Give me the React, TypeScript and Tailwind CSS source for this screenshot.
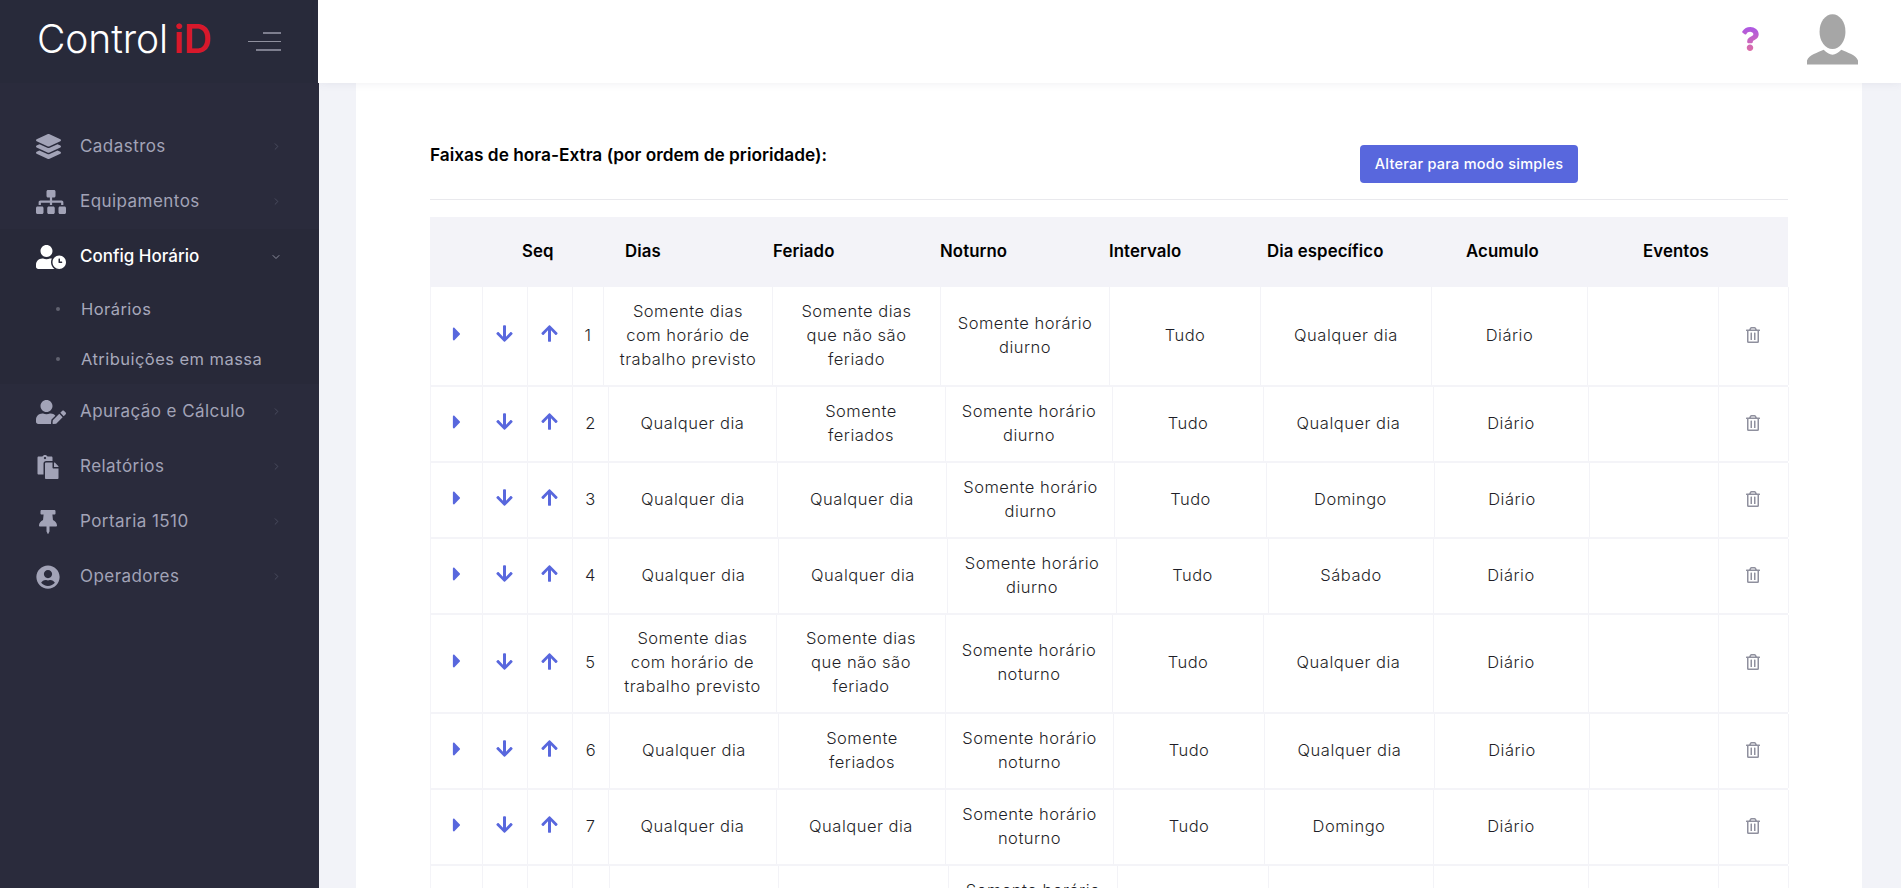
import React from 'react';
import {
  FaLayerGroup, FaSitemap, FaUserClock, FaUserEdit, FaPaste, FaThumbtack, FaUserCircle,
  FaArrowDown, FaArrowUp, FaCaretRight, FaRegTrashAlt,
} from 'react-icons/fa';
import { ChevronRight, ChevronDown } from 'lucide-react';

const menuTop = [
  { label: 'Cadastros', icon: <FaLayerGroup size={25} /> },
  { label: 'Equipamentos', icon: <FaSitemap size={30} /> },
];

const menuBottom = [
  { label: 'Apuração e Cálculo', icon: <FaUserEdit size={30} /> },
  { label: 'Relatórios', icon: <FaPaste size={24} /> },
  { label: 'Portaria 1510', icon: <FaThumbtack size={24} /> },
  { label: 'Operadores', icon: <FaUserCircle size={24} /> },
];

const headers = [
  { label: 'Seq', className: 'w-[195px] pl-[92px]' },
  { label: 'Dias', className: 'w-[148px]' },
  { label: 'Feriado', className: 'w-[167px]' },
  { label: 'Noturno', className: 'w-[169px]' },
  { label: 'Intervalo', className: 'w-[158px]' },
  { label: 'Dia específico', className: 'w-[199px]' },
  { label: 'Acumulo', className: 'w-[177px]' },
  { label: 'Eventos', className: 'w-[100px]' },
];

const uteis = 'Somente dias\ncom horário de\ntrabalho previsto';
const naoFeriado = 'Somente dias\nque não são\nferiado';
const feriados = 'Somente\nferiados';
const diurno = 'Somente horário\ndiurno';
const noturno = 'Somente horário\nnoturno';

const rows = [
  { seq: 1, h: 'h-[100px]', cols: 'grid-cols-[52px_45px_45px_31px_169px_168px_169px_151px_171px_156px_131px_70px]', cells: [uteis, naoFeriado, diurno, 'Tudo', 'Qualquer dia', 'Diário'] },
  { seq: 2, h: 'h-[76px]', cols: 'grid-cols-[52px_45px_45px_36px_168px_169px_167px_151px_170px_155px_130px_70px]', cells: ['Qualquer dia', feriados, diurno, 'Tudo', 'Qualquer dia', 'Diário'] },
  { seq: 3, h: 'h-[76px]', cols: 'grid-cols-[52px_45px_45px_36px_169px_169px_168px_152px_168px_155px_129px_70px]', cells: ['Qualquer dia', 'Qualquer dia', diurno, 'Tudo', 'Domingo', 'Diário'] },
  { seq: 4, h: 'h-[76px]', cols: 'grid-cols-[52px_45px_45px_36px_170px_169px_169px_152px_165px_155px_130px_70px]', cells: ['Qualquer dia', 'Qualquer dia', diurno, 'Tudo', 'Sábado', 'Diário'] },
  { seq: 5, h: 'h-[99px]', cols: 'grid-cols-[52px_45px_45px_36px_168px_169px_167px_151px_170px_155px_130px_70px]', cells: [uteis, naoFeriado, noturno, 'Tudo', 'Qualquer dia', 'Diário'] },
  { seq: 6, h: 'h-[76px]', cols: 'grid-cols-[52px_45px_45px_37px_169px_167px_168px_151px_170px_155px_129px_70px]', cells: ['Qualquer dia', feriados, noturno, 'Tudo', 'Qualquer dia', 'Diário'] },
  { seq: 7, h: 'h-[76px]', cols: 'grid-cols-[52px_45px_45px_36px_168px_169px_168px_151px_169px_155px_130px_70px]', cells: ['Qualquer dia', 'Qualquer dia', noturno, 'Tudo', 'Domingo', 'Diário'] },
  { seq: 8, h: 'h-[76px]', cols: 'grid-cols-[52px_45px_45px_37px_169px_170px_169px_151px_165px_155px_130px_70px]', cells: ['Qualquer dia', 'Qualquer dia', noturno, 'Tudo', 'Sábado', 'Diário'] },
];

const MenuItem = ({ label, icon }: { label: string; icon: React.ReactNode }) => (
  <div className="flex h-[55px] items-center pl-9 pr-[37px] text-[#a2a3b7]">
    <div className="flex w-11 shrink-0 items-center">{icon}</div>
    <span className="flex-1 text-[17px] tracking-[0.45px]">{label}</span>
    <ChevronRight size={11} className="text-[#4c4e60]" />
  </div>
);

const Cell = ({ children }: { children?: React.ReactNode }) => (
  <div className="flex items-center justify-center whitespace-pre-line border-r border-[#f3f3f7] pb-[3px] text-center">
    {children}
  </div>
);

const App = () => {
  return (
    <div className="flex h-screen overflow-hidden bg-[#f2f3f8] [font-family:Inter,sans-serif]">
      {/* Sidebar */}
      <aside className="w-[319px] shrink-0 bg-[#2a2b3c]">
        <div className="flex h-[83px] items-center bg-[#282a3a] pl-[37px] pr-[38px]">
          <span className="flex-1 whitespace-nowrap pb-[6px] text-[39px] font-light leading-none tracking-[-0.1px] text-white [word-spacing:-5px]">
            Control <span className="font-semibold tracking-[-0.2px] text-[#d8182b]">iD</span>
          </span>
          <div className="flex w-[33px] flex-col items-end gap-[7px]">
            <div className="h-[1.5px] w-[18px] bg-[#7d7e8e]" />
            <div className="h-[1.5px] w-[33px] bg-[#8f909e]" />
            <div className="h-[1.5px] w-[25px] bg-[#7d7e8e]" />
          </div>
        </div>
        <nav className="pt-[36px]">
          {menuTop.map((m) => <MenuItem key={m.label} {...m} />)}
          <div className="bg-[#282939]">
            <div className="flex h-[55px] items-center pl-9 pr-[37px] text-white">
              <div className="flex w-11 shrink-0 items-center"><FaUserClock size={30} /></div>
              <span className="flex-1 text-[17px] font-medium">Config Horário</span>
              <ChevronDown size={12} className="text-[#8b8c9c]" />
            </div>
            {['Horários', 'Atribuições em massa'].map((s) => (
              <div key={s} className="flex h-[50px] items-center pl-14 text-[#a7a8bb]">
                <div className="mr-[21px] h-1 w-1 rounded-full bg-[#60616f]" />
                <span className="text-[16.5px] tracking-[0.45px]">{s}</span>
              </div>
            ))}
          </div>
          {menuBottom.map((m) => <MenuItem key={m.label} {...m} />)}
        </nav>
      </aside>

      <div className="flex min-w-0 flex-1 flex-col">
        {/* Top bar */}
        <header className="relative z-10 -ml-px flex h-[83px] shrink-0 items-center justify-end bg-white pr-[43px] shadow-[0_1px_8px_rgba(80,80,110,0.08)]">
          <svg viewBox="0 0 384 512" className="mr-[48px] mt-[-5px] h-6 w-[18px]">
            <defs>
              <linearGradient id="q" x1="0" y1="0" x2="0" y2="1">
                <stop offset="0" stopColor="#ac57e4" />
                <stop offset="1" stopColor="#dd6ea6" />
              </linearGradient>
            </defs>
            <path fill="url(#q)" d="M202.021 0C122.202 0 70.503 32.703 29.914 91.026c-7.363 10.58-5.093 25.086 5.178 32.874l43.138 32.709c10.373 7.865 25.132 6.026 33.253-4.148 25.049-31.381 43.63-49.449 82.757-49.449 30.764 0 68.816 19.799 68.816 49.631 0 22.552-18.617 34.134-48.993 51.164-35.423 19.86-82.299 44.576-82.299 106.405V320c0 13.255 10.745 24 24 24h72.471c13.255 0 24-10.745 24-24v-5.773c0-42.86 125.268-44.645 125.268-160.627C377.504 66.256 286.902 0 202.021 0zM192 373.459c-38.196 0-69.271 31.075-69.271 69.271 0 38.195 31.075 69.27 69.271 69.27s69.271-31.075 69.271-69.271-31.075-69.27-69.271-69.27z" />
          </svg>
          <svg viewBox="0 0 52 52" className="mt-[-6px] h-[52px] w-[51px]">
            <ellipse cx="26" cy="18.5" rx="13.2" ry="17.8" fill="#a6a6a6" />
            <path fill="#a6a6a6" d="M17 37c3 3 6 5 9 5s6-2 9-5c6 3 15 5 17 11 .5 1.500 0 4 0 4H0s-.5-2.500 0-4c2-6 11-8 17-11z" />
          </svg>
        </header>

        {/* Card */}
        <main className="ml-[37px] mr-[39px] flex-1 bg-white px-[74px] text-[#1f1f28]">
          <div className="flex h-[117px] border-b border-[#e9e9ed]">
            <h3 className="mt-[62px] w-[930px] text-[17.3px] font-semibold leading-5 text-black">
              Faixas de hora-Extra (por ordem de prioridade):
            </h3>
            <button className="mt-[62px] h-[38px] w-[218px] rounded bg-[#5867dd] text-[14.5px] font-medium tracking-[0.25px] text-white">
              Alterar para modo simples
            </button>
          </div>

          <div className="mt-[17px]">
            <div className="flex h-[70px] items-center bg-[#f3f3f8] pb-px text-[16.8px] font-semibold tracking-[0.1px] text-black">
              {headers.map((h) => <div key={h.label} className={h.className}>{h.label}</div>)}
            </div>

            {rows.map((r) => (
              <div key={r.seq} className={`grid ${r.cols} ${r.h} border-b-2 border-l border-[#f4f4f8] text-[16.5px] font-light leading-6 tracking-[0.5px]`}>
                <Cell><FaCaretRight size={22} className="mb-0.5 text-[#5867dd]" /></Cell>
                <Cell><FaArrowDown size={19} className="mb-0.5 mr-px text-[#5867dd]" /></Cell>
                <Cell><FaArrowUp size={19} className="mb-0.5 mr-px text-[#5867dd]" /></Cell>
                <Cell>{r.seq}</Cell>
                {r.cells.map((c, i) => <Cell key={i}>{c}</Cell>)}
                <Cell />
                <Cell><FaRegTrashAlt size={16} className="mr-0.5 text-[#8f909e]" /></Cell>
              </div>
            ))}
          </div>
        </main>
      </div>
    </div>
  );
};

export default App;
